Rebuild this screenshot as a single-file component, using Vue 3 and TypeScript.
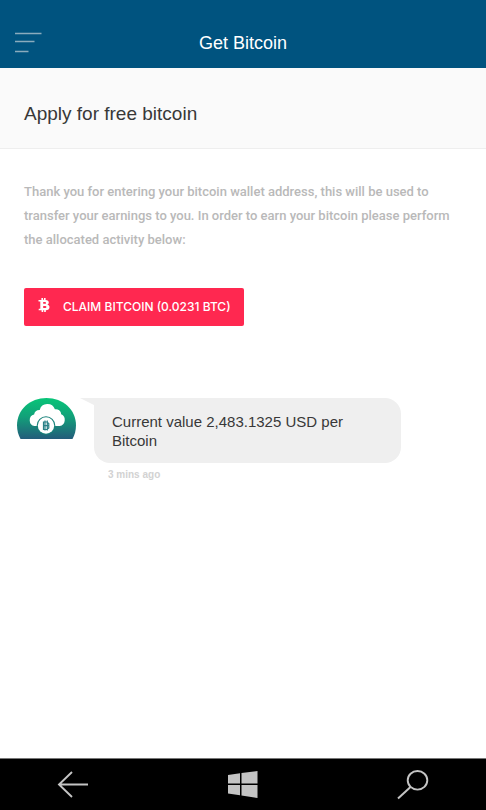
<script setup lang="ts">
import { ref } from 'vue'

interface Message {
  id: number
  text: string
  time: string
}

const amount = ref<string>('0.0231')
const messages = ref<Message[]>([
  { id: 1, text: 'Current value 2,483.1325 USD per Bitcoin', time: '3 mins ago' },
])
</script>

<template>
  <div class="screen">
    <header class="topbar">
      <button class="menu" type="button" aria-label="Menu">
        <svg width="28" height="22" viewBox="0 0 28 22" aria-hidden="true">
          <path d="M0 1.500H26.500M0 9.500H19.500M0 19.500H13.500" stroke="#8aabbd" stroke-width="1.500" fill="none" />
        </svg>
      </button>
      <h1>Get Bitcoin</h1>
    </header>

    <section class="intro">
      <h2>Apply for free bitcoin</h2>
    </section>

    <main class="content">
      <p class="lead">
        Thank you for entering your bitcoin wallet address, this will be used to transfer your
        earnings to you. In order to earn your bitcoin please perform the allocated activity below:
      </p>
      <button class="claim" type="button">
        <svg width="12" height="14" viewBox="0 0 12 14" aria-hidden="true">
          <path
            fill="#fff"
            fill-rule="evenodd"
            d="M3.400 0H5v1.800h1V0h1.600v1.900C9.700 2.100 10.800 3 10.800 4.400c0 1.100-.6 1.800-1.500 2.200C10.700 7 11.500 7.900 11.500 9.200c0 1.900-1.400 2.900-3.700 3.100V14H6.200v-1.700h-1V14H3.600v-1.700H.6l.2-1.600h1.500V3.500H.5V1.900h2.900zM5.200 4.100v1.600h1.100c1.200 0 1.700-.2 1.700-.8S7.500 4.100 6.300 4.100zM5.200 8v2h1.400c1.300 0 1.800-.3 1.800-1s-.5-1-1.800-1z"
          />
        </svg>
        <span>CLAIM BITCOIN ({{ amount }} BTC)</span>
      </button>
    </main>

    <section class="feed" aria-label="Messages">
      <article v-for="message in messages" :key="message.id" class="message">
        <svg class="avatar" width="60" height="42" viewBox="0 0 60 42" aria-hidden="true">
          <defs>
            <linearGradient id="avatarFill" x1="0" y1="0" x2="0" y2="1">
              <stop offset="0" stop-color="#08c578" />
              <stop offset="0.450" stop-color="#12a179" />
              <stop offset="1" stop-color="#235c7b" />
            </linearGradient>
          </defs>
          <path d="M3.500 41C1.200 37 0 32 0 27.500C0 11.500 13 0 29.500 0S59 11.500 59 27.500C59 32 57.800 37 55.500 41Z" fill="url(#avatarFill)" />
          <path
            d="M17.500 28a5.900 5.900 0 0 1-.4-11.500a5.500 5.500 0 0 1 5.600-4.600a8 8 0 0 1 15.200-.6a5.300 5.300 0 0 1 6.300 5a6.200 6.200 0 0 1-1.500 11.700z"
            fill="#fff"
          />
          <circle cx="29" cy="27.500" r="9.300" fill="#18827a" />
          <circle cx="29" cy="27.500" r="8.200" fill="#fff" />
          <path d="M26.500 24h3.500l1.800 1.500v4.500l-1.800 1.500h-3.500zM28 22.500v10M30.300 22.500v10M26.500 27.700h5" fill="none" stroke="#2b8087" stroke-width="1.200" />
        </svg>
        <div class="body">
          <p class="bubble">{{ message.text }}</p>
          <time>{{ message.time }}</time>
        </div>
      </article>
    </section>

    <nav class="system" aria-label="System">
      <button type="button" aria-label="Back">
        <svg width="32" height="28" viewBox="0 0 32 28" aria-hidden="true">
          <path d="M31 13.500H2M15 1L2 13.500L15 26" fill="none" stroke="#c4c4c4" stroke-width="1.900" />
        </svg>
      </button>
      <button type="button" aria-label="Start">
        <svg width="30" height="28" viewBox="0 0 30 28" aria-hidden="true">
          <path d="M0 4L12 2.300V12.500H0ZM13.500 2L29.500 0V12.500H13.500ZM0 14H12V24.200L0 22.500ZM13.500 14H29.500V27L13.500 24.500Z" fill="#c4c4c4" />
        </svg>
      </button>
      <button type="button" aria-label="Search">
        <svg width="32" height="30" viewBox="0 0 32 30" aria-hidden="true">
          <ellipse cx="20.500" cy="10.300" rx="9.800" ry="9.300" fill="none" stroke="#c4c4c4" stroke-width="1.900" />
          <path d="M13.500 17L1 28.500" stroke="#c4c4c4" stroke-width="2" />
        </svg>
      </button>
    </nav>
  </div>
</template>

<style>
body {
  margin: 0;
  background: #fff;
}
</style>

<style scoped>
.screen {
  display: flex;
  flex-direction: column;
  min-height: 100vh;
  font-family: "Liberation Sans", Arial, sans-serif;
  color: #383838;
}

h1,
h2,
p {
  margin: 0;
  font-weight: 400;
}

button {
  margin: 0;
  padding: 0;
  border: 0;
  background: none;
  cursor: pointer;
}

svg {
  display: block;
}

.topbar {
  display: grid;
  grid-template-columns: 28px 1fr 28px;
  align-items: center;
  box-sizing: border-box;
  height: 68px;
  padding: 17px 15px 0;
  background: #00537f;
  color: #fff;
}

.topbar h1 {
  font-size: 18px;
  line-height: 20px;
  text-align: center;
}

.intro {
  padding: 34px 24px 22px;
  background: #fafafa;
  border-bottom: 1px solid #eee;
}

.intro h2 {
  font-size: 19px;
  line-height: 24px;
}

.content {
  padding: 31px 24px 0;
}

.lead {
  font-family: Roboto, "Liberation Sans", sans-serif;
  font-size: 13px;
  font-weight: 500;
  line-height: 24px;
  color: #b9b9b9;
}

.claim {
  display: flex;
  align-items: center;
  gap: 13px;
  height: 38px;
  margin-top: 36px;
  padding: 0 13px 0 14px;
  border-radius: 2px;
  background: #ff2850;
  color: #fff;
  font-family: Inter, "Liberation Sans", sans-serif;
  font-size: 12px;
  font-weight: 500;
  line-height: 16px;
}

.claim svg {
  margin-bottom: 4px;
}

.feed {
  flex: 1;
  padding: 72px 17px 24px;
}

.message {
  display: flex;
  align-items: flex-start;
  gap: 17px;
}

.avatar {
  flex: none;
}

.body {
  flex: 0 1 307px;
}

.bubble {
  position: relative;
  padding: 14px 40px 13px 18px;
  border-radius: 0 16px 16px 16px;
  background: #efefef;
  font-size: 15px;
  line-height: 19px;
}

.bubble::before {
  content: "";
  position: absolute;
  top: 0;
  left: -14px;
  width: 14px;
  height: 7px;
  background: #efefef;
  clip-path: polygon(0 0, 100% 0, 100% 100%);
}

time {
  display: block;
  padding: 5px 14px 0;
  font-size: 10px;
  font-weight: 700;
  line-height: 14px;
  color: #d2d2d2;
}

.system {
  display: flex;
  align-items: center;
  justify-content: space-between;
  box-sizing: border-box;
  height: 52px;
  padding: 0 57px;
  border-top: 1px solid #777;
  background: #000;
}
</style>
